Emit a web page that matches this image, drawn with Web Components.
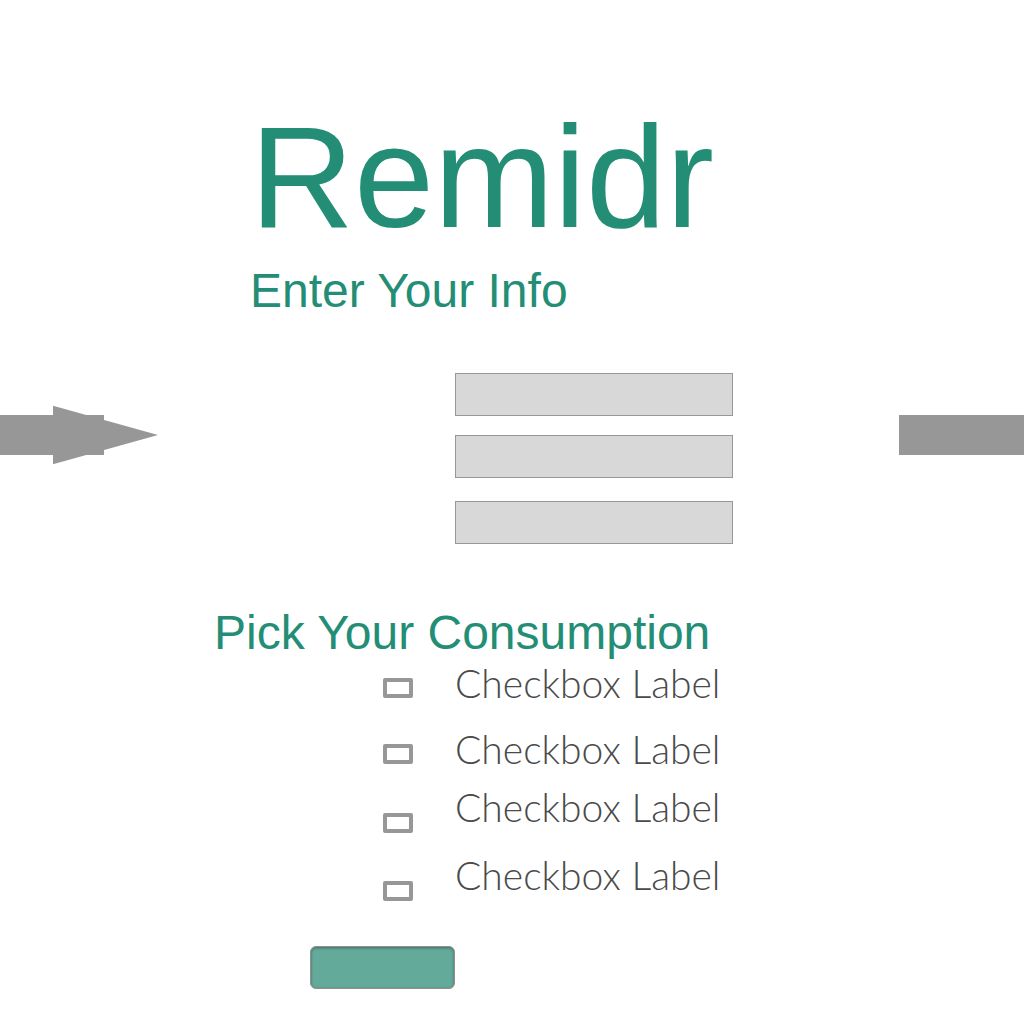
<!DOCTYPE html>
<html lang="en">
<head>
<meta charset="utf-8">
<title>Remidr</title>
<style>
body { margin: 0; background: #fff; font-family: "Liberation Sans", Arial, sans-serif; }
</style>
</head>
<body>
<remidr-page>
  <flow-arrow slot="before"></flow-arrow>
  <remidr-heading size="title" inset>Remidr</remidr-heading>
  <remidr-heading inset>Enter Your Info</remidr-heading>
  <info-fields></info-fields>
  <remidr-heading>Pick Your Consumption</remidr-heading>
  <check-list>
    <check-option>Checkbox Label</check-option>
    <check-option>Checkbox Label</check-option>
    <check-option low>Checkbox Label</check-option>
    <check-option low>Checkbox Label</check-option>
  </check-list>
  <submit-button></submit-button>
  <flow-bar slot="after"></flow-bar>
</remidr-page>
<script>
const define = (name, html, setup) => customElements.define(name, class extends HTMLElement {
  constructor() {
    super();
    this.attachShadow({ mode: "open" }).innerHTML = html;
    if (setup) setup(this);
  }
});

define("remidr-page", `
<style>
:host { display: grid; grid-template-columns: 158px minmax(0, 1fr) 125px; min-height: 100vh; }
main { padding: 98px 0 32px 56px; }
.content { max-width: 519px; display: flex; flex-direction: column; }
</style>
<slot name="before"></slot>
<main><div class="content"><slot></slot></div></main>
<slot name="after"></slot>`);

define("flow-arrow", `
<style>
:host { display: block; padding-top: 405px; }
svg { display: block; width: 158px; height: 60px; fill: #979797; }
</style>
<svg viewBox="0 0 158 60" aria-hidden="true"><path d="M0 10H104V50H0Z"/><path d="M53 .7L158 30L53 59.3Z"/></svg>`);

define("flow-bar", `
<style>
:host { display: block; padding-top: 415px; }
div { height: 40px; background: #979797; }
</style>
<div></div>`);

define("remidr-heading", `
<style>
:host { display: block; color: #238e75; }
:host([inset]) { padding-left: 36px; }
h1, h2 { margin: 0; font-weight: 400; white-space: nowrap; }
h1 { font-size: 144px; line-height: 160px; margin-bottom: 5px; }
h2 { font-size: 48px; line-height: 56px; }
</style>
<h2><slot></slot></h2>`, host => {
  if (host.getAttribute("size") === "title") {
    const h1 = document.createElement("h1");
    h1.append(document.createElement("slot"));
    host.shadowRoot.querySelector("h2").replaceWith(h1);
  }
});

define("info-fields", `
<style>
:host { display: flex; flex-direction: column; align-items: flex-end; padding: 54px 0 61px; }
input { box-sizing: border-box; width: 278px; height: 43px; margin: 0 0 19px; padding: 0 8px;
  border: 1px solid #979797; border-radius: 0; background: #d8d8d8; font: 20px "Liberation Sans", sans-serif; }
input:nth-of-type(2) { margin-bottom: 23px; }
input:last-of-type { margin-bottom: 0; }
</style>
<input type="text" aria-label="Info 1"><input type="text" aria-label="Info 2"><input type="text" aria-label="Info 3">`);

define("check-list", `
<style>
:host { display: flex; flex-direction: column; padding-left: 169px; }
::slotted(:nth-child(1)) { height: 66px; }
::slotted(:nth-child(2)) { height: 58px; }
::slotted(:nth-child(3)) { height: 68px; }
::slotted(:nth-child(4)) { height: 93px; }
</style>
<slot></slot>`);

define("check-option", `
<style>
:host { display: flex; align-items: flex-start; gap: 42px; }
input { appearance: none; box-sizing: border-box; flex: none; width: 30px; height: 20px; margin: 17px 0 0;
  border: 4px solid #979797; border-radius: 2px; background: #fff; }
:host([low]) input { margin-top: 28px; }
input:checked { background: #238e75; }
label { font: 300 39px/44px Lato, "Open Sans", sans-serif; color: #4a4a4a; white-space: nowrap; }
</style>
<input type="checkbox" id="box"><label for="box"><slot></slot></label>`);

define("submit-button", `
<style>
:host { display: block; padding-left: 96px; }
button { display: block; box-sizing: border-box; width: 145px; height: 43px; padding: 0;
  border: 1px solid #978c8b; border-radius: 6px; background: #64aa9a; box-shadow: inset 0 1px 3px #3f6f64; }
</style>
<button type="button" aria-label="Submit"></button>`);
</script>
</body>
</html>
